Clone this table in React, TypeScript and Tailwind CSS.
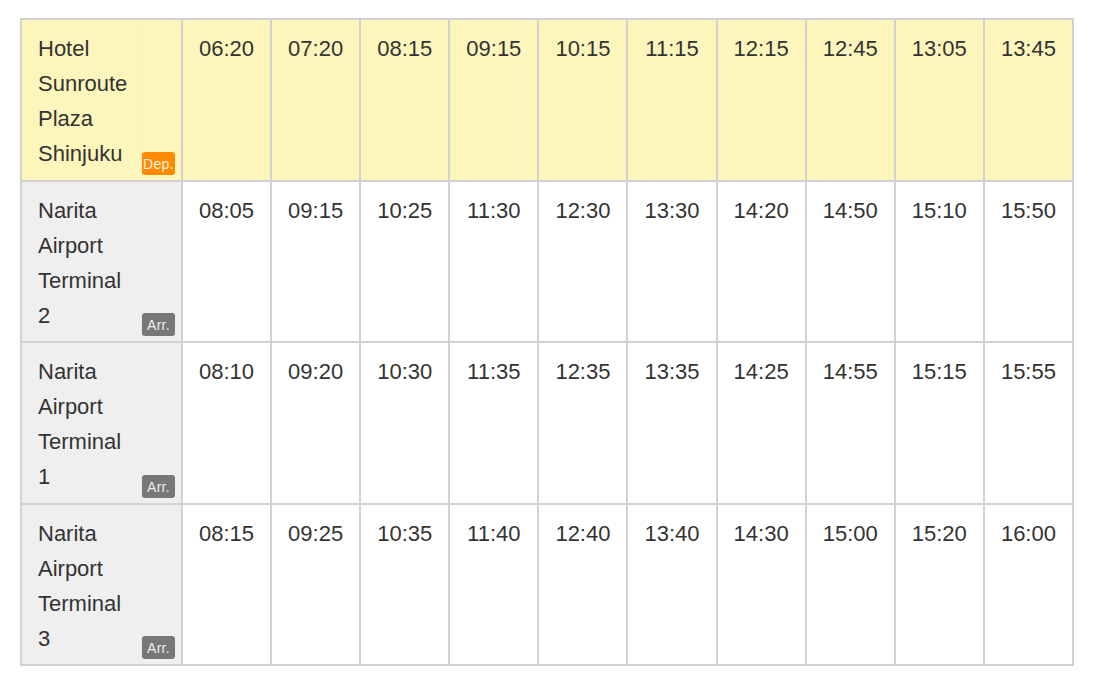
import React from "react";

const header = { name: ["Hotel", "Sunroute", "Plaza", "Shinjuku"], times: ["06:20", "07:20", "08:15", "09:15", "10:15", "11:15", "12:15", "12:45", "13:05", "13:45"] };
const rows = [
  { h: "h-[159px]", name: ["Narita", "Airport", "Terminal", "2"], times: ["08:05", "09:15", "10:25", "11:30", "12:30", "13:30", "14:20", "14:50", "15:10", "15:50"] },
  { h: "h-[160px]", name: ["Narita", "Airport", "Terminal", "1"], times: ["08:10", "09:20", "10:30", "11:35", "12:35", "13:35", "14:25", "14:55", "15:15", "15:55"] },
  { h: "h-[159px]", name: ["Narita", "Airport", "Terminal", "3"], times: ["08:15", "09:25", "10:35", "11:40", "12:40", "13:40", "14:30", "15:00", "15:20", "16:00"] },
];

function NameCell({ name, dep, h }: { name: string[]; dep: boolean; h: string }) {
  return (
    <td className={`border-2 border-[#d2d2d2] p-0 align-top ${dep ? "bg-[#fdf6bc]" : "bg-[#efefef]"}`}>
      <div className={`flex ${h}`}>
        <div className="w-[121px] pl-[16px] pt-[11px] leading-[35px]">
          {name.map((n, i) => (
            <div key={i}>{n}</div>
          ))}
        </div>
        <div className={`flex flex-1 items-end justify-end border-l ${dep ? "border-[#f6efb6]" : "border-[#e9e9e9]"} pb-[5px] pr-[6px]`}>
          <span
            className={`flex h-[23px] w-[33px] items-center justify-center rounded-[3px] text-[14px] leading-none tracking-[0.3px] ${dep ? "bg-[#ff8a00] text-[#fff4e0]" : "bg-[#777777] text-[#eeeeee]"}`}
          >
            {dep ? "Dep." : "Arr."}
          </span>
        </div>
      </div>
    </td>
  );
}

function TimeCells({ times, dep }: { times: string[]; dep: boolean }) {
  return (
    <>
      {times.map((t, i) => (
        <td
          key={i}
          className={`border-2 border-[#d2d2d2] p-0 pt-[11px] text-center align-top leading-[35px] ${dep ? "bg-[#fdf6bc]" : "bg-white"}`}
        >
          {t}
        </td>
      ))}
    </>
  );
}

export default function App() {
  return (
    <div className="min-h-[681px] w-[1094px] bg-white px-[20px] pt-[18px] text-[22px] text-[#333333]" style={{ fontFamily: '"Liberation Sans", Arial, sans-serif' }}>
      <table className="w-[1054px] table-fixed border-collapse">
        <colgroup>
          <col className="w-[161px]" />
          {header.times.map((_, i) => (
            <col key={i} />
          ))}
        </colgroup>
        <tbody>
          <tr>
            <NameCell name={header.name} dep={true} h="h-[160px]" />
            <TimeCells times={header.times} dep={true} />
          </tr>
          {rows.map((r, i) => (
            <tr key={i}>
              <NameCell name={r.name} dep={false} h={r.h} />
              <TimeCells times={r.times} dep={false} />
            </tr>
          ))}
        </tbody>
      </table>
    </div>
  );
}
